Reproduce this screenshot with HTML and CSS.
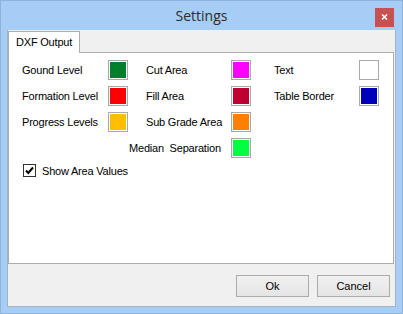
FILE: index.html
```html
<!DOCTYPE html>
<html lang="en">
<head>
    <meta charset="UTF-8">
    <title>Settings</title>
    <link rel="stylesheet" href="styles.css">
</head>
<body>
<div class="window">
    <div class="titlebar">
        <span></span>
        <span class="title">Settings</span>
        <button class="close" type="button">
            <svg width="7" height="6" viewBox="0 0 7 6"><path d="M1 0.5 L6 5.5 M6 0.5 L1 5.5" stroke="#fff" stroke-width="1.6" fill="none"/></svg>
        </button>
    </div>

    <div class="client">
        <div class="tabs">
            <div class="tab">DXF Output</div>
        </div>
        <div class="panel">
            <div class="grid">
                <span class="label">Gound Level</span>
                <span class="swatch"><i style="background:#00802b"></i></span>
                <span class="label">Cut Area</span>
                <span class="swatch"><i style="background:#ff00ff"></i></span>
                <span class="label">Text</span>
                <span class="swatch"><i style="background:#ffffff"></i></span>

                <span class="label">Formation Level</span>
                <span class="swatch"><i style="background:#ff0000"></i></span>
                <span class="label">Fill Area</span>
                <span class="swatch"><i style="background:#c00030"></i></span>
                <span class="label">Table Border</span>
                <span class="swatch"><i style="background:#0000bb"></i></span>

                <span class="label">Progress Levels</span>
                <span class="swatch"><i style="background:#ffbf00"></i></span>
                <span class="label">Sub Grade Area</span>
                <span class="swatch"><i style="background:#ff8000"></i></span>
                <span></span><span></span>

                <span></span><span></span>
                <span class="label median">Median&nbsp; Separation</span>
                <span class="swatch"><i style="background:#00ff40"></i></span>
            </div>
            <div class="check">
                <span class="box">
                    <svg width="11" height="11" viewBox="0 0 11 11"><path d="M2 5.5 L4.3 8 L9 2.5" stroke="#000" stroke-width="2" fill="none"/></svg>
                </span>
                <span>Show Area Values</span>
            </div>
        </div>
        <div class="actions">
            <button type="button" class="btn">Ok</button>
            <button type="button" class="btn">Cancel</button>
        </div>
    </div>
</div>
</body>
</html>
```

FILE: styles.css
```css
body {
    margin: 0;
    font-family: "Liberation Sans", Arial, sans-serif;
    font-size: 11px;
    color: #000;
}
.window {
    width: 403px;
    height: 314px;
    box-sizing: border-box;
    background: #a5cdf5;
    border: 1px solid #8fb3d9;
}
.titlebar {
    height: 29px;
    display: grid;
    grid-template-columns: 1fr auto 1fr;
    align-items: center;
    padding-right: 8px;
}
.title {
    font-family: "Open Sans", "Noto Sans", sans-serif;
    font-size: 14px;
    color: #2b2b2b;
    padding-left: 8px;
}
.close {
    justify-self: end;
    width: 19px;
    height: 19px;
    margin-top: 3px;
    padding: 0;
    border: none;
    background: #c75050;
    display: flex;
    align-items: center;
    justify-content: center;
}
.client {
    margin: 0 6px 6px 6px;
    height: 277px;
    box-sizing: border-box;
    background: #f0f0f0;
    border: 1px solid #a3b2c4;
    border-top: none;
    padding-top: 1px;
}
.tabs {
    display: flex;
    height: 21px;
}
.tab {
    position: relative;
    z-index: 1;
    width: 72px;
    height: 22px;
    box-sizing: border-box;
    padding: 4px 0 0 7px;
    background: #fff;
    border: 1px solid #adadad;
    border-bottom: none;
    white-space: nowrap;
    letter-spacing: -0.2px;
}
.panel {
    height: 212px;
    margin-right: 1px;
    box-sizing: border-box;
    background: #fff;
    border: 1px solid #adadad;
    padding: 7px 0 0 13px;
}
.grid {
    display: grid;
    grid-template-columns: 86px 38px 85px 43px 85px 20px;
    grid-auto-rows: 20px;
    row-gap: 6px;
    align-items: center;
}
.median {
    margin-left: -17px;
}
.label {
    white-space: nowrap;
    letter-spacing: -0.2px;
}
.swatch {
    width: 20px;
    height: 20px;
    box-sizing: border-box;
    border: 1px solid #a9a9a9;
    padding: 1px;
    background: #fff;
}
.swatch i {
    display: block;
    width: 16px;
    height: 16px;
}
.check {
    display: flex;
    align-items: center;
    gap: 6px;
    margin: 6px 0 0 1px;
    letter-spacing: -0.2px;
}
.box {
    width: 13px;
    height: 13px;
    box-sizing: border-box;
    border: 1px solid #333;
    background: #fff;
    display: flex;
    align-items: center;
    justify-content: center;
}
.actions {
    display: flex;
    justify-content: flex-end;
    gap: 8px;
    margin: 11px 5px 0 0;
}
.btn {
    width: 73px;
    height: 22px;
    padding: 0;
    font-family: "Liberation Sans", Arial, sans-serif;
    font-size: 11px;
    color: #000;
    background: linear-gradient(#f0f0f0, #e5e5e5);
    border: 1px solid #acacac;
}
```
